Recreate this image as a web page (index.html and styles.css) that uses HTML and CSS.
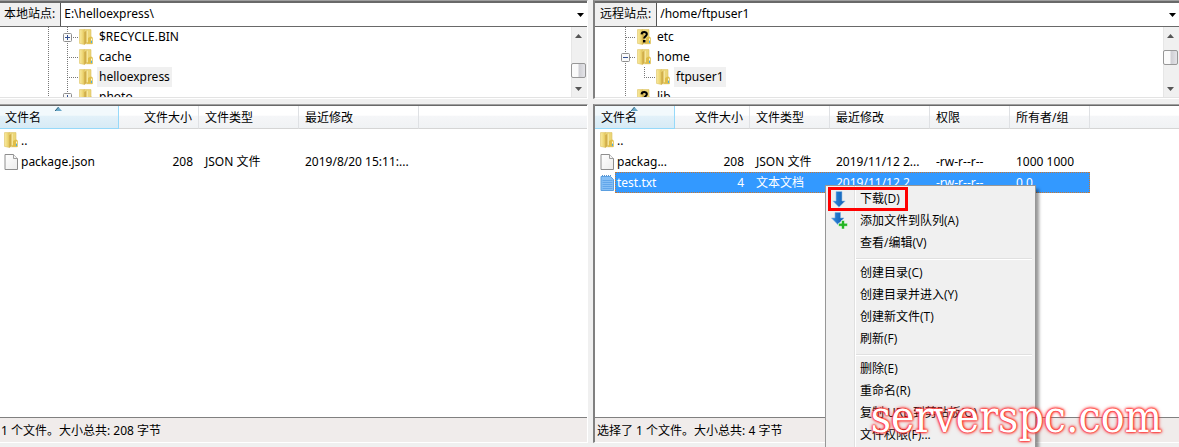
FILE: index.html
```html
<!DOCTYPE html>
<html lang="zh-CN">
<head>
<meta charset="utf-8">
<title>FTP</title>
<link rel="stylesheet" href="styles.css">
</head>
<body>
<svg class="defs" aria-hidden="true">
  <defs>
    <linearGradient id="gold" x1="0" x2="1"><stop offset="0" stop-color="#f8e9a0"/><stop offset=".5" stop-color="#f1dc80"/><stop offset="1" stop-color="#e2c455"/></linearGradient>
    <linearGradient id="blue" x1="0" x2="1"><stop offset="0" stop-color="#2f8ae0"/><stop offset="1" stop-color="#0f5cb0"/></linearGradient>
    <linearGradient id="paper" x1="0" y1="0" x2="1" y2="1"><stop offset="0" stop-color="#fff"/><stop offset="1" stop-color="#ececec"/></linearGradient>
    <symbol id="folder" viewBox="0 0 14 16">
      <path d="M5 .6h7v7l1.300 1v6.200H5z" fill="#ecd678" stroke="#dcc163" stroke-width=".6"/>
      <path d="M9 9l2.500-1.500 2 1.200v6H8z" fill="#dfbd48"/>
      <path d="M.5.6H5.500v14.800L.5 14.400z" fill="url(#gold)" stroke="#e3ca72" stroke-width=".7"/>
      <path d="M5.200 3.200L7.600 1.400v12.400l-2.400 1.900z" fill="#d1ae4a"/>
      <path d="M7.600 1.800H9v11.400H7.600z" fill="#f6e69c"/>
      <path d="M12.500 11.500v2.500" stroke="#4eaee0" stroke-width="1"/>
      <path d="M12.500 9.500v2" stroke="#fff8dc" stroke-width="1"/>
    </symbol>
    <symbol id="unknown" viewBox="0 0 14 16">
      <use href="#folder" width="14" height="16"/>
      <path d="M4.600 5.400C4.700 2.300 10 2.300 9.800 5.200 9.700 7.200 7.200 7.300 7.200 9.600" fill="none" stroke="#000" stroke-width="2.100"/>
      <path d="M6 11h2.500v2.400H6z"/>
    </symbol>
    <symbol id="file" viewBox="0 0 14 16">
      <path d="M1 .5h8.500l4 4v11H1z" fill="url(#paper)" stroke="#8e8e8e"/>
      <path d="M9.500.5v4h4" fill="#f4f4f4" stroke="#9d9d9d"/>
    </symbol>
    <symbol id="text" viewBox="0 0 14 16">
      <path d="M1 1.500h9.500l3 3v11H1z" fill="#86bff5" stroke="#5b9fe0"/>
      <path d="M2.500 5.500h10M2.500 7.500h10M2.500 9.500h10M2.500 11.500h10M2.500 13.500h10" stroke="#62a6ea"/>
      <path d="M2 .5h9" stroke="#5b93cc" stroke-dasharray="1 1"/>
    </symbol>
    <symbol id="plus" viewBox="0 0 9 9">
      <rect x=".5" y=".5" width="8" height="8" rx="1" fill="#fafafa" stroke="#8f8f8f"/><path d="M2 4.500h5M4.500 2v5" stroke="#34508f"/>
    </symbol>
    <symbol id="minus" viewBox="0 0 9 9">
      <rect x=".5" y=".5" width="8" height="8" rx="1" fill="#fafafa" stroke="#8f8f8f"/><path d="M2 4.500h5" stroke="#34508f"/>
    </symbol>
    <symbol id="up" viewBox="0 0 7 4"><path d="M0 4L3.500 0 7 4z" fill="#555"/></symbol>
    <symbol id="down" viewBox="0 0 7 4"><path d="M0 0h7L3.500 4z" fill="#555"/></symbol>
    <symbol id="sort" viewBox="0 0 7 4"><path d="M0 4L3.500 0 7 4z" fill="#6aa9c9"/><path d="M0 4L3.500 0" stroke="#2c5f78"/></symbol>
  </defs>
</svg>
<main class="window">
  <section class="pane">
    <div class="box">
      <div class="address">
        <label for="local">本地站点:</label>
        <div class="combo">
          <select id="local"><option>E:\helloexpress\</option></select>
          <svg class="caret" width="7" height="4"><path d="M0 0h7L3.500 4z"/></svg>
        </div>
      </div>
      <div class="tree">
        <ul class="nodes">
          <li><svg class="guide" width="79" height="20"><path d="M48.500 0v20M67.500 0v20M69 10.500h9"/><use href="#plus" x="63" y="6" width="9" height="9"/></svg><svg class="icon"><use href="#folder"/></svg><span>$RECYCLE.BIN</span></li>
          <li><svg class="guide" width="79" height="20"><path d="M48.500 0v20M67.500 0v20M69 10.500h9"/></svg><svg class="icon"><use href="#folder"/></svg><span>cache</span></li>
          <li><svg class="guide" width="79" height="20"><path d="M48.500 0v20M67.500 0v20M69 10.500h9"/></svg><svg class="icon"><use href="#folder"/></svg><span class="current">helloexpress</span></li>
          <li><svg class="guide" width="79" height="20"><path d="M48.500 0v20M67.500 0v20M69 10.500h9"/><use href="#plus" x="63" y="6" width="9" height="9"/></svg><svg class="icon"><use href="#folder"/></svg><span>photo</span></li>
        </ul>
        <div class="scroll low"><svg class="arrow"><use href="#up"/></svg><i class="thumb"></i><svg class="arrow"><use href="#down"/></svg></div>
      </div>
    </div>
    <div class="box files">
      <div class="list">
        <table>
          <colgroup><col class="w119"><col class="w80"><col class="w100"><col class="w120"><col></colgroup>
          <thead><tr><th class="sorted">文件名<svg class="sort"><use href="#sort"/></svg></th><th class="num">文件大小</th><th>文件类型</th><th>最近修改</th><th class="rest"></th></tr></thead>
          <tbody>
            <tr><td><div class="name"><svg class="icon"><use href="#folder"/></svg><span>..</span></div></td><td></td><td></td><td></td><td></td></tr>
            <tr><td><div class="name"><svg class="icon"><use href="#file"/></svg><span>package.json</span></div></td><td class="num">208</td><td>JSON 文件</td><td>2019/8/20 15:11:...</td><td></td></tr>
          </tbody>
        </table>
      </div>
      <footer class="status">1 个文件。大小总共: 208 字节</footer>
    </div>
  </section>

  <section class="pane remote">
    <div class="box">
      <div class="address">
        <label for="remote">远程站点:</label>
        <div class="combo">
          <select id="remote"><option>/home/ftpuser1</option></select>
          <svg class="caret" width="7" height="4"><path d="M0 0h7L3.500 4z"/></svg>
        </div>
      </div>
      <div class="tree">
        <ul class="nodes">
          <li><svg class="guide" width="42" height="20"><path d="M30.500 0v20M31 10.500h10"/></svg><svg class="icon"><use href="#unknown"/></svg><span>etc</span></li>
          <li><svg class="guide" width="42" height="20"><path d="M30.500 0v20M31 10.500h10"/><use href="#minus" x="26" y="6" width="9" height="9"/></svg><svg class="icon"><use href="#folder"/></svg><span>home</span></li>
          <li><svg class="guide" width="61" height="20"><path d="M30.500 0v20M49.500 0v10M49 10.500h11"/></svg><svg class="icon"><use href="#folder"/></svg><span class="current">ftpuser1</span></li>
          <li><svg class="guide" width="42" height="20"><path d="M30.500 0v20M31 10.500h10"/></svg><svg class="icon"><use href="#unknown"/></svg><span>lib</span></li>
        </ul>
        <div class="scroll high"><svg class="arrow"><use href="#up"/></svg><i class="thumb"></i><svg class="arrow"><use href="#down"/></svg></div>
      </div>
    </div>
    <div class="box files">
      <div class="list">
        <table>
          <colgroup><col class="w80"><col class="w75"><col class="w80"><col class="w100"><col class="w80"><col class="w80"><col></colgroup>
          <thead><tr><th class="sorted">文件名<svg class="sort"><use href="#sort"/></svg></th><th class="num">文件大小</th><th>文件类型</th><th>最近修改</th><th>权限</th><th>所有者/组</th><th class="rest"></th></tr></thead>
          <tbody>
            <tr><td><div class="name"><svg class="icon"><use href="#folder"/></svg><span>..</span></div></td><td></td><td></td><td></td><td></td><td></td><td></td></tr>
            <tr><td><div class="name"><svg class="icon"><use href="#file"/></svg><span>packag...</span></div></td><td class="num">208</td><td>JSON 文件</td><td>2019/11/12 2...</td><td>-rw-r--r--</td><td>1000 1000</td><td></td></tr>
            <tr class="selected"><td><div class="name"><svg class="icon"><use href="#text"/></svg><span>test.txt</span></div></td><td class="num">4</td><td>文本文档</td><td>2019/11/12 2...</td><td>-rw-r--r--</td><td>0 0</td><td></td></tr>
          </tbody>
        </table>
      </div>
      <footer class="status">选择了 1 个文件。大小总共: 4 字节</footer>
    </div>
  </section>

  <div class="menu" role="menu">
    <button role="menuitem" class="marked"><svg width="18" height="18"><path d="M6 1.500h6V11h3.200L9 17.200 2.800 11H6z" fill="url(#blue)" stroke="#9cc4ea" stroke-width=".6"/></svg>下载(D)</button>
    <button role="menuitem"><svg width="18" height="18"><path d="M5 .5h5.500V6H14l-6.200 6.500L1.500 6H5z" fill="url(#blue)" stroke="#7fb0e0" stroke-width=".6"/><path d="M11.500 8.500h3v2.800h3v3h-3V17h-3v-2.700h-3v-3h3z" fill="#25b625" stroke="#fff" stroke-width=".5"/></svg>添加文件到队列(A)</button>
    <button role="menuitem">查看/编辑(V)</button>
    <hr>
    <button role="menuitem">创建目录(C)</button>
    <button role="menuitem">创建目录并进入(Y)</button>
    <button role="menuitem">创建新文件(T)</button>
    <button role="menuitem">刷新(F)</button>
    <hr>
    <button role="menuitem">删除(E)</button>
    <button role="menuitem">重命名(R)</button>
    <button role="menuitem">复制 URL 到剪贴板(O)</button>
    <button role="menuitem">文件权限(F)...</button>
  </div>
  <div class="watermark">serverspc.com</div>
</main>
</body>
</html>
```
FILE: styles.css
```css
* { box-sizing: border-box; }
body {
  margin: 0;
  background: #f0f0f0;
  color: #000;
  font: 12px/20px "Noto Sans", "Noto Sans CJK SC", sans-serif;
}
.defs { position: absolute; width: 0; height: 0; }
.window {
  position: relative;
  display: grid;
  grid-template-columns: 588fr 586fr;
  gap: 5px;
  height: 100vh;
  overflow: hidden;
}
.pane {
  display: flex;
  flex-direction: column;
  gap: 5px;
  min-width: 0;
  padding-bottom: 4px;
}
.box {
  border-top: 1px solid #a0a0a0;
  border-bottom: 1px solid #fff;
  border-right: 1px solid #fff;
  box-shadow: inset 0 2px #696969;
  padding-top: 2px;
}
.files {
  flex: 1;
  display: flex;
  flex-direction: column;
  min-height: 0;
  padding-top: 1px;
  box-shadow: inset 0 1px #696969;
}
.remote .box { border-left: 2px solid #808080; border-right: 0; }
.address {
  display: flex;
  height: 24px;
  border-bottom: 1px solid #696969;
  background: #fff;
}
.address label {
  background: #f0f0f0;
  border-right: 1px solid #555;
  padding: 1px 5px 0 4px;
  white-space: nowrap;
}
.remote .address label { padding-left: 5px; }
.combo { position: relative; flex: 1; display: flex; }
.combo select {
  appearance: none;
  flex: 1;
  border: 0;
  margin: 0;
  padding: 0 20px 1px 3px;
  background: #fff;
  color: #000;
  font: inherit;
}
.caret { position: absolute; right: 3px; top: 10px; pointer-events: none; }
.tree {
  display: flex;
  height: 71px;
  overflow: hidden;
  background: #fff;
  border-bottom: 1px solid #e3e3e3;
}
.nodes { flex: 1; margin: 0; padding: 0; list-style: none; }
.nodes li { display: flex; height: 20px; align-items: center; }
.guide { flex: none; fill: none; }
.guide > path { stroke: #777; stroke-dasharray: 1 1; }
.icon { flex: none; width: 14px; height: 16px; }
.nodes span { margin-left: 4px; padding: 0 2px; }
.current { background: #f0f0f0; }
.scroll {
  display: flex;
  flex-direction: column;
  align-items: center;
  width: 16px;
  padding: 7px 1px 6px 0;
  background: #f0f0f0;
  box-shadow: inset 1px 0 #e6e6e6;
}
.arrow { width: 7px; height: 4px; }
.thumb {
  width: 15px;
  height: 15px;
  border: 1px solid #979797;
  border-radius: 2px;
  background: linear-gradient(90deg, #fafafa 0 45%, #cfcfd4 55%, #e4e4e8);
}
.low .thumb { margin: auto 0 9px; }
.high .thumb { margin: 12px 0 auto; }
.list { flex: 1; min-height: 0; overflow: hidden; background: #fff; }
table { width: 100%; table-layout: fixed; border-collapse: separate; border-spacing: 0; }
.w75 { width: 75px; }
.w80 { width: 80px; }
.w100 { width: 100px; }
.w119 { width: 119px; }
.w120 { width: 120px; }
th {
  position: relative;
  height: 23px;
  padding: 2px 6px 0;
  border-right: 1px solid #dfe1e4;
  border-bottom: 1px solid #d5d5d5;
  background: linear-gradient(#fff 0 42%, #f5f6f8 46%, #f0f2f4);
  font-weight: 400;
  text-align: left;
  white-space: nowrap;
}
th.rest { border-right: 0; }
th.sorted {
  padding-left: 5px;
  border-color: #96d9f9;
  background: linear-gradient(#f2f9fc 0 42%, #e2f1f9 46%, #d7ebf5);
}
.remote th.sorted { padding-left: 6px; }
.sort { position: absolute; top: 1px; left: calc(50% - 4px); width: 7px; height: 4px; }
td { height: 21px; padding: 0 6px; line-height: 19px; white-space: nowrap; overflow: hidden; }
tbody tr:first-child td { height: 22px; }
th.num, td.num { text-align: right; }
td:first-child { padding: 0 0 0 4px; }
.remote td:first-child { padding-left: 5px; }
.name { display: flex; align-items: center; }
.name span { flex: 1; margin-left: 1px; padding: 0 2px; }
.selected td:not(:first-child):not(:last-child), .selected .name span {
  background:
    repeating-linear-gradient(90deg, #c87832 0 1px, #3399ff 1px 2px) top / 100% 1px no-repeat,
    repeating-linear-gradient(90deg, #c87832 0 1px, #3399ff 1px 2px) bottom / 100% 1px no-repeat,
    #3399ff;
  color: #fff;
}
.selected .name span { padding: 1px 2px 1px 1px; border-left: 1px dotted #c87832; }
.selected td:nth-last-child(2) { border-right: 1px dotted #c87832; }
.status {
  height: 25px;
  padding: 0 1px;
  border-top: 1px solid #808080;
  background: #f0eceb;
  line-height: 25px;
}
.remote .status { padding-left: 2px; }
.menu {
  position: absolute;
  left: 825px;
  top: 185px;
  width: 211px;
  height: 270px;
  padding: 2px;
  border: 1px solid #979797;
  background: linear-gradient(90deg, #f0f0f0 28px, #e0e0e0 28px 29px, #fff 29px 30px, #f0f0f0 30px);
  box-shadow: 3px 4px 3px #0006;
}
.menu button {
  display: flex;
  align-items: center;
  width: 100%;
  height: 22px;
  padding: 0 0 0 32px;
  border: 0;
  background: none;
  color: #000;
  font: 12px/20px "Open Sans", "Noto Sans CJK SC", sans-serif;
  text-align: left;
  white-space: nowrap;
}
.menu button svg { flex: none; margin: 0 12px 0 -30px; }
.menu button.marked {
  width: 78px;
  margin-left: 1px;
  padding-left: 31px;
  outline: 3px solid #f00;
  outline-offset: -2px;
}
.menu hr {
  height: 2px;
  margin: 4px 1px 2px 28px;
  border: 0;
  border-top: 1px solid #e0e0e0;
  border-bottom: 1px solid #fff;
}
.watermark {
  position: absolute;
  right: 17px;
  bottom: 5px;
  color: #fff;
  font: 44px/50px "DejaVu Serif Condensed", "DejaVu Serif", serif;
  text-shadow: 0 0 2px #f22, 0 0 2px #f22, 0 0 3px #f33, 0 0 4px #f44;
  pointer-events: none;
}
```
